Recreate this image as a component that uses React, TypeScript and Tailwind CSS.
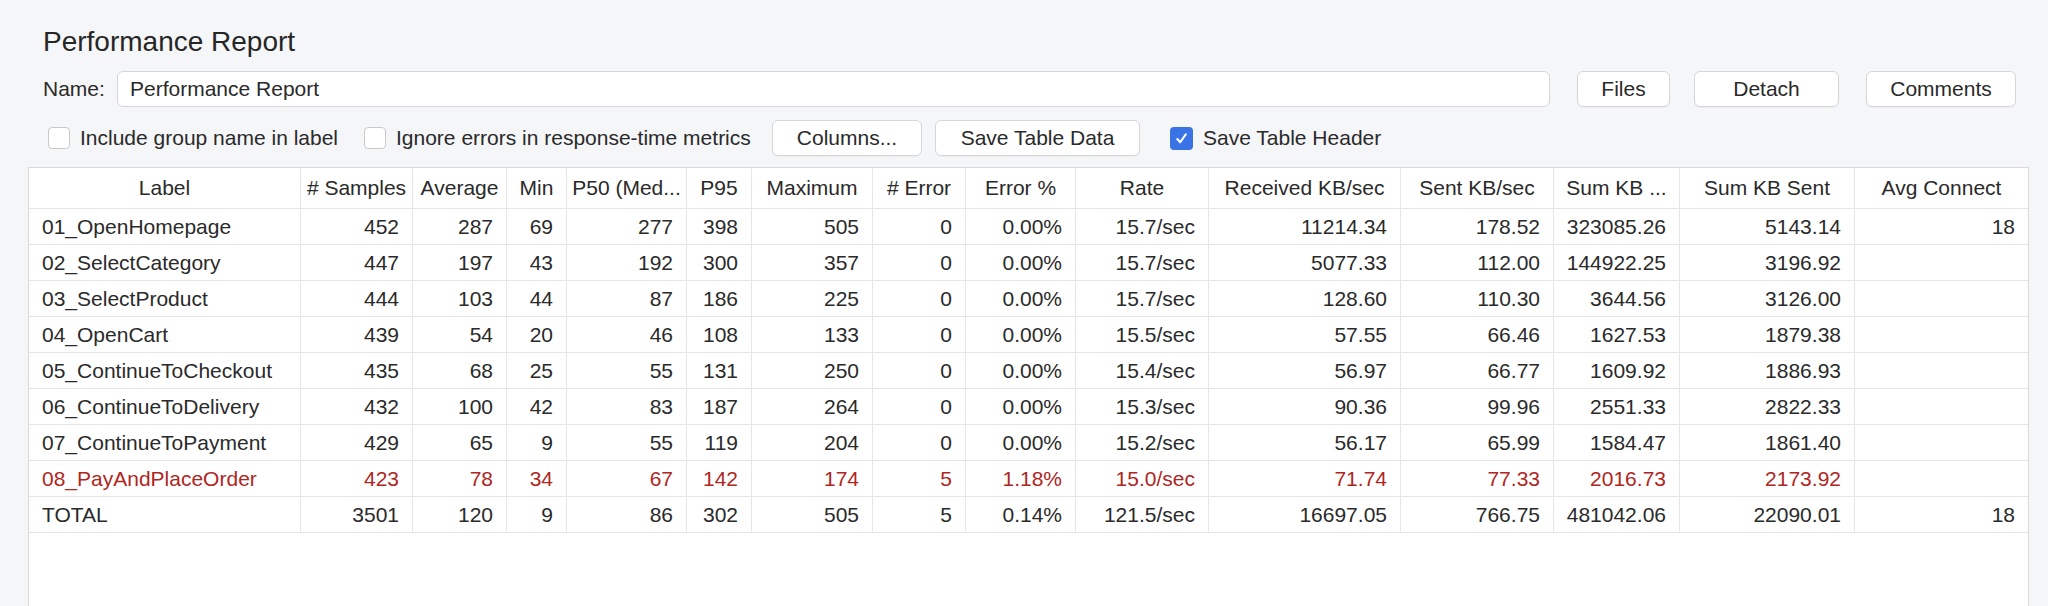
import React from "react";

const COLS = [
  "w-[272px]",
  "w-[112px]",
  "w-[94px]",
  "w-[60px]",
  "w-[120px]",
  "w-[65px]",
  "w-[121px]",
  "w-[93px]",
  "w-[110px]",
  "w-[133px]",
  "w-[192px]",
  "w-[153px]",
  "w-[126px]",
  "w-[175px]",
  "w-[173px]",
];

const HEADERS = [
  "Label",
  "# Samples",
  "Average",
  "Min",
  "P50 (Med...",
  "P95",
  "Maximum",
  "# Error",
  "Error %",
  "Rate",
  "Received KB/sec",
  "Sent KB/sec",
  "Sum KB ...",
  "Sum KB Sent",
  "Avg Connect",
];

type Row = { cells: string[]; red?: boolean };

const ROWS: Row[] = [
  { cells: ["01_OpenHomepage", "452", "287", "69", "277", "398", "505", "0", "0.00%", "15.7/sec", "11214.34", "178.52", "323085.26", "5143.14", "18"] },
  { cells: ["02_SelectCategory", "447", "197", "43", "192", "300", "357", "0", "0.00%", "15.7/sec", "5077.33", "112.00", "144922.25", "3196.92", ""] },
  { cells: ["03_SelectProduct", "444", "103", "44", "87", "186", "225", "0", "0.00%", "15.7/sec", "128.60", "110.30", "3644.56", "3126.00", ""] },
  { cells: ["04_OpenCart", "439", "54", "20", "46", "108", "133", "0", "0.00%", "15.5/sec", "57.55", "66.46", "1627.53", "1879.38", ""] },
  { cells: ["05_ContinueToCheckout", "435", "68", "25", "55", "131", "250", "0", "0.00%", "15.4/sec", "56.97", "66.77", "1609.92", "1886.93", ""] },
  { cells: ["06_ContinueToDelivery", "432", "100", "42", "83", "187", "264", "0", "0.00%", "15.3/sec", "90.36", "99.96", "2551.33", "2822.33", ""] },
  { cells: ["07_ContinueToPayment", "429", "65", "9", "55", "119", "204", "0", "0.00%", "15.2/sec", "56.17", "65.99", "1584.47", "1861.40", ""] },
  { cells: ["08_PayAndPlaceOrder", "423", "78", "34", "67", "142", "174", "5", "1.18%", "15.0/sec", "71.74", "77.33", "2016.73", "2173.92", ""], red: true },
  { cells: ["TOTAL", "3501", "120", "9", "86", "302", "505", "5", "0.14%", "121.5/sec", "16697.05", "766.75", "481042.06", "22090.01", "18"] },
];

function Button({ label, w }: { label: string; w: string }) {
  return (
    <div
      className={`${w} h-[36px] shrink-0 flex items-center justify-center rounded-[6px] border border-[#d6d6d8] bg-white text-[21px] text-[#2a2a2a] shadow-[0_1px_1px_rgba(0,0,0,0.04)]`}
    >
      {label}
    </div>
  );
}

function Checkbox({ checked }: { checked?: boolean }) {
  if (checked) {
    return (
      <div className="w-[23px] h-[23px] shrink-0 rounded-[4px] bg-[#3a73e5] flex items-center justify-center">
        <svg width="15" height="15" viewBox="0 0 16 16" fill="none">
          <path d="M3.5 8.6 L6.6 12 L12.6 3.6" stroke="white" strokeWidth="2.2" strokeLinecap="round" strokeLinejoin="round" />
        </svg>
      </div>
    );
  }
  return <div className="w-[22px] h-[22px] shrink-0 rounded-[4px] border border-[#c9c9cc] bg-white" />;
}

export default function App() {
  return (
    <div className="w-[2048px] h-[606px] overflow-hidden bg-[#f5f6f8] flex flex-col font-['Liberation_Sans',Arial,sans-serif] text-[#2a2a2a]">
      <div className="pt-[25px] pl-[43px] text-[28px] leading-[34px] text-[#262626]">Performance Report</div>

      <div className="mt-[12px] h-[36px] flex items-center pl-[43px] pr-[32px]">
        <span className="text-[21px] w-[74px] shrink-0">Name:</span>
        <div className="flex-1 h-[36px] rounded-[6px] border border-[#d6d6d8] bg-white flex items-center pl-[12px] text-[21px]">
          Performance Report
        </div>
        <div className="ml-[27px]">
          <Button label="Files" w="w-[93px]" />
        </div>
        <div className="ml-[24px]">
          <Button label="Detach" w="w-[145px]" />
        </div>
        <div className="ml-[27px]">
          <Button label="Comments" w="w-[150px]" />
        </div>
      </div>

      <div className="mt-[13px] h-[36px] flex items-center pl-[48px] text-[21px]">
        <Checkbox />
        <span className="ml-[10px] w-[262px] shrink-0 whitespace-nowrap">Include group name in label</span>
        <div className="ml-[22px]">
          <Checkbox />
        </div>
        <span className="ml-[10px] w-[360px] shrink-0 whitespace-nowrap">Ignore errors in response-time metrics</span>
        <div className="ml-[16px]">
          <Button label="Columns..." w="w-[150px]" />
        </div>
        <div className="ml-[13px]">
          <Button label="Save Table Data" w="w-[205px]" />
        </div>
        <div className="ml-[30px]">
          <Checkbox checked />
        </div>
        <span className="ml-[10px] whitespace-nowrap">Save Table Header</span>
      </div>

      <div className="mt-[11px] ml-[28px] w-[2001px] flex-1 bg-white border-l border-t border-r border-[#d9d9db] text-[21px]">
        <div className="flex h-[41px] border-b border-[#e6e6e8]">
          {HEADERS.map((h, i) => (
            <div
              key={i}
              className={`${COLS[i]} shrink-0 flex items-center justify-center whitespace-nowrap overflow-hidden ${i < HEADERS.length - 1 ? "border-r border-[#e6e6e8]" : ""}`}
            >
              {h}
            </div>
          ))}
        </div>
        {ROWS.map((r, ri) => (
          <div key={ri} className={`flex h-[36px] border-b border-[#e6e6e8] ${r.red ? "text-[#b0261f]" : ""}`}>
            {r.cells.map((c, i) => (
              <div
                key={i}
                className={`${COLS[i]} shrink-0 flex items-center whitespace-nowrap overflow-hidden ${i === 0 ? "justify-start pl-[13px]" : "justify-end pr-[13px]"} ${i < r.cells.length - 1 ? "border-r border-[#e6e6e8]" : ""}`}
              >
                {c}
              </div>
            ))}
          </div>
        ))}
      </div>
    </div>
  );
}
